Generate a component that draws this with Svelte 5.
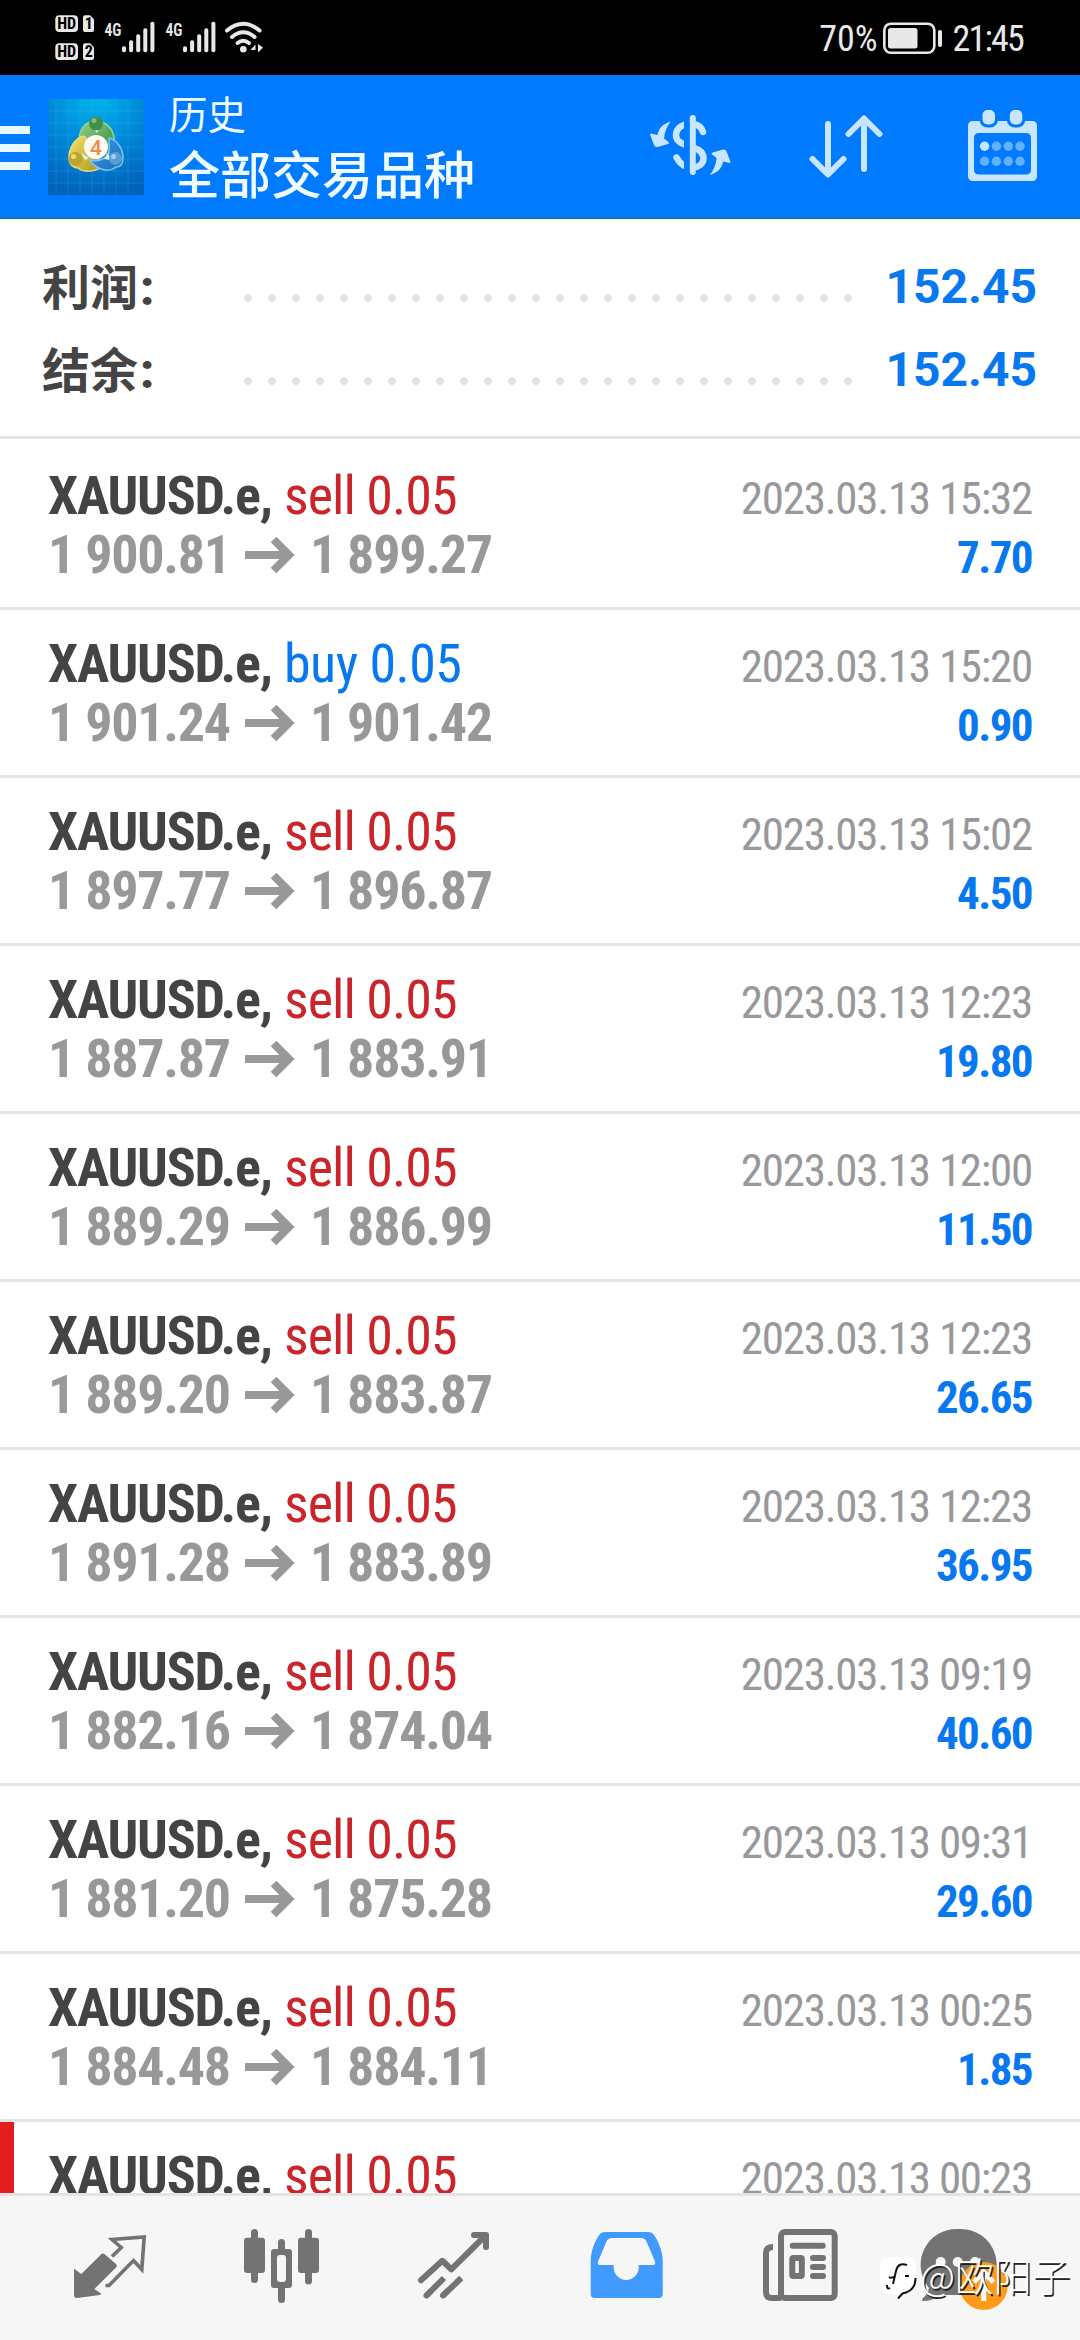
<script lang="ts">
	type Deal = {
		side: 'buy' | 'sell';
		open: string;
		close: string;
		time: string;
		profit: string;
		flagged?: boolean;
	};

	const symbol = 'XAUUSD.e';
	const volume = '0.05';

	const summary = [
		{ label: '利润', value: '152.45' },
		{ label: '结余', value: '152.45' }
	];

	const deals: Deal[] = [
		{ side: 'sell', open: '1 900.81', close: '1 899.27', time: '2023.03.13 15:32', profit: '7.70' },
		{ side: 'buy', open: '1 901.24', close: '1 901.42', time: '2023.03.13 15:20', profit: '0.90' },
		{ side: 'sell', open: '1 897.77', close: '1 896.87', time: '2023.03.13 15:02', profit: '4.50' },
		{ side: 'sell', open: '1 887.87', close: '1 883.91', time: '2023.03.13 12:23', profit: '19.80' },
		{ side: 'sell', open: '1 889.29', close: '1 886.99', time: '2023.03.13 12:00', profit: '11.50' },
		{ side: 'sell', open: '1 889.20', close: '1 883.87', time: '2023.03.13 12:23', profit: '26.65' },
		{ side: 'sell', open: '1 891.28', close: '1 883.89', time: '2023.03.13 12:23', profit: '36.95' },
		{ side: 'sell', open: '1 882.16', close: '1 874.04', time: '2023.03.13 09:19', profit: '40.60' },
		{ side: 'sell', open: '1 881.20', close: '1 875.28', time: '2023.03.13 09:31', profit: '29.60' },
		{ side: 'sell', open: '1 884.48', close: '1 884.11', time: '2023.03.13 00:25', profit: '1.85' },
		{ side: 'sell', open: '', close: '', time: '2023.03.13 00:23', profit: '', flagged: true }
	];

	const signalBars = [6, 12, 18, 24, 30.5];
	const calendarDots = [22.6, 34.4, 46.3, 58];
</script>

<div class="screen">
	<div class="status-bar">
		<svg class="status-left" width="220" height="60" viewBox="0 0 220 60">
			{#each [0, 28] as dy, i}
				<g transform="translate(0 {dy})">
					<rect x="5.3" y="7.3" width="22.7" height="16.7" rx="4" />
					<text class="hd" x="7.2" y="21" textLength="19" lengthAdjust="spacingAndGlyphs">HD</text>
					<path d="M35 7.3h5l4 4V22q0 2-2 2h-7q-2 0-2-2V9.3q0-2 2-2z" />
					<text class="hd" x="34.8" y="21">{i + 1}</text>
				</g>
			{/each}
			{#each [0, 61] as dx}
				<g transform="translate({dx} 0)">
					<text class="net" x="54.5" y="27.5" textLength="17" lengthAdjust="spacingAndGlyphs">4G</text>
					{#each signalBars as h, i}
						<rect x={72 + i * 7.1} y={44.2 - h} width="4" height={h} rx="1.8" />
					{/each}
				</g>
			{/each}
			<g class="wifi">
				<path d="M177 22.5Q193.3 9 209.6 22.5" />
				<path d="M182 29Q193.3 19.5 204.6 29" />
				<path d="M187.500 35Q193.3 30.5 199 35" />
			</g>
			<circle cx="193.3" cy="41.2" r="3.3" />
			<path d="M205.5 36.5v8M205.5 36.5l-5 5.5h5zM208 36v8.5l5-5z" />
		</svg>
		<div class="status-right">
			<span class="percent">70%</span>
			<svg width="60" height="34" viewBox="0 0 60 34">
				<rect x="1.3" y="1.8" width="50" height="29" rx="6.5" fill="none" stroke="#e8e8e8" stroke-width="2.6" />
				<rect x="5" y="6" width="29.5" height="20.5" rx="2.5" fill="#e8e8e8" />
				<rect x="55" y="8" width="4" height="17" rx="2" fill="#e8e8e8" />
			</svg>
			<span class="clock">21:45</span>
		</div>
	</div>

	<header class="app-bar">
		<svg class="menu" width="30" height="44" viewBox="0 0 30 44">
			<path d="M0 0h30v8H0zM0 18h30v8H0zM0 36h30v8H0z" fill="#e8f8ff" />
		</svg>
		<svg class="logo" width="96" height="96" viewBox="0 0 96 96">
			<defs>
				<radialGradient id="tile" cx=".5" cy="0" r="1">
					<stop offset="0" stop-color="#00b4ee" />
					<stop offset=".5" stop-color="#0088d8" />
					<stop offset="1" stop-color="#0062bb" />
				</radialGradient>
				<linearGradient id="green" x1="0" y1="0" x2="1" y2="1">
					<stop offset="0" stop-color="#9ad08b" />
					<stop offset="1" stop-color="#2a8a35" />
				</linearGradient>
				<linearGradient id="yellow" x1="0" y1="0" x2="1" y2="1">
					<stop offset="0" stop-color="#f5e36b" />
					<stop offset="1" stop-color="#a8971a" />
				</linearGradient>
				<linearGradient id="blue" x1="0" y1="0" x2="1" y2="1">
					<stop offset="0" stop-color="#3a9ce0" />
					<stop offset="1" stop-color="#1d6fc0" />
				</linearGradient>
			</defs>
			<rect width="96" height="96" fill="url(#tile)" />
			<path
				d="M8 0v96M20 0v96M32 0v96M44 0v96M56 0v96M68 0v96M80 0v96M0 12h96M0 24h96M0 36h96M0 48h96M0 60h96M0 72h96M0 84h96"
				stroke="#4cc4f0"
				stroke-opacity=".22"
			/>
			<g stroke-width="1.5">
				<path d="M31 42C31 29 38 22 48 22s18 8 18 19c0 7-3 11-6 14L36 50q-5-3-5-8z" fill="url(#green)" stroke="#8fd7a0" />
				<path d="M36 37C26 39 21 50 21 59c0 7 5 10 9 10 6 5 18 4 24-2L43 45z" fill="url(#yellow)" stroke="#e6dc7a" />
				<path d="M61 39c9 2 14 12 14 20 0 6-3 9-7 9-7 6-20 3-26-7 8 2 16-1 19-7z" fill="url(#blue)" stroke="#7cc4f2" />
			</g>
			<path d="M45 29h7l-3 5zM33 54l4 7 4-2zM60 54l-4 6 7 1z" fill="#e5f4ea" />
			<circle cx="48" cy="24.5" r="7" fill="#3f9145" />
			<circle cx="46" cy="21.5" r="2.5" fill="#86bd83" />
			<circle cx="27.5" cy="60" r="7" fill="#bba52c" />
			<circle cx="25.5" cy="57.5" r="2.5" fill="#ead975" />
			<circle cx="67.5" cy="59.5" r="6.5" fill="#559fd4" />
			<circle cx="65.5" cy="57.5" r="2.5" fill="#a3d2f0" />
			<circle cx="48" cy="48" r="12" fill="#fdfaf6" />
			<text class="logo-digit" x="42" y="55.5">4</text>
		</svg>
		<div class="titles">
			<div class="title-small">历史</div>
			<div class="title-large">全部交易品种</div>
		</div>
		<div class="actions">
			<svg width="80" height="80" viewBox="0 0 80 80">
				<rect x="39.8" y="8" width="6" height="60" rx="3" fill="#c8e6ff" />
				<clipPath id="cut"><path d="M0 0h34v80H0zM43 0h37v80H43z" /></clipPath>
				<g clip-path="url(#cut)" fill="none" stroke="#c8e6ff" stroke-width="6.5" stroke-linecap="round">
					<path d="M53 25C51.500 20 48 17.500 43 17c-9-1-17 3-17 11.500C26 41 53.500 37 53.500 51 53.500 57 49 60 43 60.500c-9 0-13.500-4-16.500-10" />
				</g>
				<g fill="#c8e6ff">
					<path d="M20.800 14.500C12.500 17 9 21 7.500 28L.8 26.500q-1 0-.5 1.500L4 38q1 2.500 3.500 2L18 37q2-.8.5-2L14 31.500C14.500 25 17 19 20.800 14.500z" />
					<path transform="rotate(180 40.300 41.300)" d="M20.800 14.500C12.500 17 9 21 7.500 28L.8 26.500q-1 0-.5 1.500L4 38q1 2.500 3.500 2L18 37q2-.8.5-2L14 31.500C14.500 25 17 19 20.800 14.500z" />
				</g>
			</svg>
			<svg width="80" height="80" viewBox="0 0 80 80">
				<g fill="none" stroke="#c8e6ff" stroke-width="6" stroke-linecap="round" stroke-linejoin="round">
					<path d="M22 17v50M6.500 52 22 67.500 37.500 52" />
					<path d="M58 62V12M42.500 27 58 11.500 73.500 27" />
				</g>
			</svg>
			<svg width="80" height="80" viewBox="0 0 80 80">
				<path
					fill="#c8e6ff"
					fill-rule="evenodd"
					d="M11 14h59q5 0 5 5v50q0 5-5 5H11q-5 0-5-5V19q0-5 5-5zM17 26q-5 0-5 5v31.500q0 5 5 5h47q5 0 5-5V31q0-5-5-5z"
				/>
				<g fill="#c8e6ff" stroke="#007aff" stroke-width="3">
					<rect x="19" y="1.5" width="15.5" height="17.5" rx="6.5" />
					<rect x="46.3" y="1.5" width="15.5" height="17.5" rx="6.5" />
				</g>
				{#each calendarDots as cx, i}
					<circle {cx} cy="39.3" r="4.7" fill={i === 0 ? '#c8e6ff' : '#64b1ff'} />
					<circle {cx} cy="54.3" r="4.7" fill="#64b1ff" />
				{/each}
			</svg>
		</div>
	</header>

	<section class="summary">
		{#each summary as item}
			<div class="summary-row">
				<span class="summary-label">{item.label}<b>:</b></span>
				<span class="dots"></span>
				<span class="summary-value">{item.value}</span>
			</div>
		{/each}
	</section>

	<main class="deals">
		{#each deals as deal}
			<article class="deal" class:flagged={deal.flagged}>
				<div class="line">
					<div class="left">
						<span class="symbol">{symbol},</span>
						<span class="side {deal.side}">{deal.side} {volume}</span>
					</div>
					<span class="time">{deal.time}</span>
				</div>
				{#if deal.open}
					<div class="line">
						<div class="prices">
							<span>{deal.open}</span>
							<svg width="48" height="36" viewBox="0 0 48 36">
								<path d="M0 18h43M28.500 2.500 44 18 28.500 33.500" fill="none" stroke="#98989b" stroke-width="8" />
							</svg>
							<span>{deal.close}</span>
						</div>
						<span class="profit">{deal.profit}</span>
					</div>
				{/if}
			</article>
		{/each}
	</main>

	<nav class="tabs">
		<svg width="76" height="80" viewBox="0 0 76 80">
			<path
				d="M2.500 44 9.300 49 29 29.500q2-2 4 0L44 39q1.500 1.500 0 3.500L22.300 64l6.700 4.500L28 70 5 73q-3 0-3-3V44z"
				fill="#737373"
			/>
			<path d="M40 31.500 49.200 22.500 40 14.500 72.200 12 69.800 44.500 61.500 35.500 37 60.500H33.500" fill="none" stroke="#737373" stroke-width="3.6" />
		</svg>
		<svg width="76" height="80" viewBox="0 0 76 80" fill="#737373">
			<rect x="7" y="4" width="7" height="54" rx="3.5" />
			<rect x="0" y="12.7" width="21" height="35.3" rx="3" />
			<rect x="34" y="14" width="7" height="64" rx="3.5" />
			<rect x="27" y="24" width="21" height="39" rx="3" />
			<rect x="33" y="30" width="9" height="27" rx="3" fill="#f6f6f6" />
			<rect x="61" y="4" width="7" height="55.5" rx="3.5" />
			<rect x="54" y="12.7" width="21" height="35.3" rx="3" />
		</svg>
		<svg width="76" height="80" viewBox="0 0 76 80">
			<g fill="none" stroke="#737373" stroke-width="6" stroke-linecap="round" stroke-linejoin="round">
				<path d="M5 55.300 26.300 35.800 35.300 44.300 69.500 10.500" />
				<path d="M58 10h12v12" />
				<path d="M10.500 70.500 14 67M27 70.500l4-4" />
				<path d="M10.500 70.500 28 53M27 70.500 45.300 53" stroke-linecap="butt" />
			</g>
		</svg>
		<svg width="76" height="80" viewBox="0 0 76 80">
			<path
				fill="#419bff"
				fill-rule="evenodd"
				d="M17 7h43q4 0 6 3c5 7 8.700 17 8.700 26v33q0 4-4 4H6.700q-4 0-4-4V36c0-9 3.500-19 8.500-26q2-3 5.800-3zM24 13q-4 0-5.500 3.500L10 36.500Q9 40 12.500 40h13.200v2.500a12.500 12.500 0 0 0 25 0V40H64.500q3.500 0 2.500-3.500l-8.500-20Q57 13 53 13z"
			/>
		</svg>
		<svg width="76" height="80" viewBox="0 0 76 80">
			<g fill="none" stroke="#737373" stroke-width="6">
				<rect x="21" y="7" width="53.7" height="66" rx="4" />
				<path d="M13 22Q6 22 6 28v39q0 6 6 6h9" />
				<path d="M32.700 20.700h30M53 33h10M53 42h10M53 51h10" stroke-linecap="round" />
				<rect x="32.3" y="33" width="9.5" height="18" rx="1" />
			</g>
		</svg>
		<div class="chat">
			<svg width="76" height="88" viewBox="0 0 76 88">
				<path d="M26.500 4a36 36 0 0 1 22 66H10Q0 76-9 76q-2-1 0-3 5-4 6-10A36 36 0 0 1 26.500 4z" fill="#737373" />
				<g fill="#f6f6f6">
					<circle cx="8.7" cy="37" r="5" />
					<circle cx="25.7" cy="37" r="5" />
					<circle cx="43" cy="37" r="5" />
				</g>
				<circle cx="51.7" cy="61" r="24" fill="#ff9b1a" />
				<path d="M51.700 76V48M42 57l9.700-10 9.700 10" fill="none" stroke="#fff" stroke-width="5" />
			</svg>
			<div class="watermark">
				<svg width="38" height="44" viewBox="0 0 38 44">
					<path d="M10 1h18q9 0 9 9v14q0 12-13 14l-5 5-2-5H10Q1 38 1 28V10q0-9 9-9z" fill="#fff" />
					<path d="M36.500 22q0 13-13 15.500l-4.500 5" fill="none" stroke="#111" stroke-width="2" />
					<path d="M28 9q-9-3-11 6l-3 13M10 21q2 2 6-1M8 29q0 5 3 3M26 20h4" fill="none" stroke="#111" stroke-width="2" />
				</svg>
				<span>@欧阳子</span>
			</div>
		</div>
	</nav>
</div>

<style>
	:global(body) {
		background: #fff;
	}

	.screen {
		width: 1080px;
		height: 2340px;
		display: flex;
		flex-direction: column;
		overflow: hidden;
		background: #fff;
		font-family: 'Roboto Condensed', Roboto, 'Noto Sans CJK SC', sans-serif;
	}

	svg {
		display: block;
		flex: none;
		overflow: visible;
	}

	.status-bar {
		height: 75px;
		flex: none;
		box-sizing: border-box;
		padding: 8px 57px 0 50px;
		display: flex;
		justify-content: space-between;
		align-items: flex-start;
		background: #000;
		color: #e8e8e8;
	}

	.status-left {
		fill: #e8e8e8;
	}

	.hd {
		font-size: 16px;
		font-weight: 700;
		fill: #000;
	}

	.net {
		font-size: 19px;
		font-weight: 600;
	}

	.wifi {
		fill: none;
		stroke: #e8e8e8;
		stroke-width: 4;
		stroke-linecap: round;
	}

	.status-right {
		display: flex;
		align-items: center;
		height: 62px;
		font-size: 36px;
		line-height: 62px;
	}

	.percent {
		margin-right: 5px;
	}

	.clock {
		margin-left: 10px;
		letter-spacing: -1.8px;
	}

	.app-bar {
		height: 144px;
		flex: none;
		box-sizing: border-box;
		padding-right: 38px;
		display: flex;
		align-items: center;
		background: #007aff;
		border-bottom: 2px solid #1670c4;
	}

	.menu {
		margin-right: 18px;
		margin-top: 4px;
	}

	.logo {
		margin-top: 2px;
	}

	.logo-digit {
		font-family: Roboto, sans-serif;
		font-size: 21px;
		font-weight: 500;
		fill: #f08a3c;
	}

	.titles {
		flex: 1;
		margin: 0 0 8px 25px;
		font-family: 'Noto Sans CJK SC', sans-serif;
		font-weight: 500;
		color: #f0fcff;
		white-space: nowrap;
	}

	.title-small {
		font-size: 38.5px;
		font-weight: 400;
		line-height: 60px;
	}

	.title-large {
		font-size: 51px;
		line-height: 60px;
	}

	.actions {
		display: flex;
		gap: 76px;
		margin-top: 2px;
	}

	.summary {
		flex: none;
		height: 220px;
		box-sizing: border-box;
		padding: 26px 43px 0 42px;
		border-bottom: 3px solid #e4e4e4;
	}

	.summary-row {
		height: 83px;
		display: flex;
		align-items: center;
		font-family: Roboto, 'Noto Sans CJK SC', sans-serif;
		font-size: 48px;
		font-weight: 700;
		line-height: 83px;
	}

	.summary-label {
		width: 202px;
		color: #444;
		font-family: 'Noto Sans CJK SC', sans-serif;
	}

	.summary-label b {
		font-family: Roboto, sans-serif;
		margin-left: 2px;
	}

	.dots {
		flex: none;
		width: 624px;
		height: 8px;
		margin-top: 23px;
		margin-right: auto;
		margin-left: -8px;
		background: radial-gradient(circle, #e2e2e2 3.6px, transparent 4.2px) 0 0 / 24px 8px;
	}

	.summary-value {
		color: #0878f0;
	}

	.deals {
		flex: 1;
		min-height: 0;
		overflow: hidden;
		padding-top: 3px;
	}

	.deal {
		height: 168px;
		box-sizing: border-box;
		padding: 24px 48px 0;
		border-bottom: 3px solid #e4e4e4;
	}

	.flagged {
		padding-left: 34px;
		border-left: 14px solid #e41e20;
	}

	.line {
		height: 59px;
		display: flex;
		justify-content: space-between;
		align-items: baseline;
		line-height: 59px;
		white-space: nowrap;
	}

	.left,
	.prices {
		display: flex;
		align-items: baseline;
		font-size: 54px;
	}

	.symbol {
		width: 236px;
		color: #444;
		font-weight: 700;
		letter-spacing: -1.25px;
	}

	.side {
		font-weight: 400;
	}

	.sell {
		color: #c9252b;
		letter-spacing: -0.95px;
	}

	.buy {
		color: #0878f0;
		letter-spacing: -0.55px;
	}

	.time {
		color: #98989b;
		font-size: 45px;
		letter-spacing: -1.25px;
	}

	.prices {
		color: #98989b;
		font-weight: 700;
		letter-spacing: -1.25px;
	}

	.prices svg {
		margin: 0 17px 0 15px;
	}

	.profit {
		color: #0878f0;
		font-size: 45px;
		font-weight: 700;
		letter-spacing: -1.6px;
	}

	.tabs {
		flex: none;
		height: 147px;
		box-sizing: border-box;
		padding: 29px 72px 0;
		display: flex;
		gap: 96px;
		background: #f6f6f6;
		border-top: 3px solid #e4e4e4;
	}

	.chat {
		position: relative;
	}

	.watermark {
		position: absolute;
		left: -53px;
		top: 31px;
		display: flex;
		align-items: flex-start;
		gap: 3px;
		color: #fff;
		font-family: 'Noto Sans CJK SC', sans-serif;
		font-size: 38.5px;
		font-weight: 300;
		line-height: 36px;
		text-shadow: 1.5px 1.5px 0.5px #222;
		white-space: nowrap;
	}
</style>
